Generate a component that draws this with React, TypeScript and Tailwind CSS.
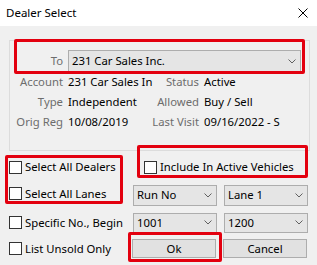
import React from "react";

const font = { fontFamily: '"Noto Sans", "Open Sans", sans-serif' };

function Chevron() {
  return (
    <svg width="8" height="5" viewBox="0 0 8 5" className="shrink-0">
      <path d="M0.5 0.5 L4 4 L7.5 0.5" fill="none" stroke="#606060" strokeWidth="1" />
    </svg>
  );
}

function Combo({ text, className }: { text: string; className: string }) {
  return (
    <div
      className={`flex items-center justify-between bg-[#e5e5e5] border border-[#adadad] pl-[3px] pr-[4px] text-[11.3px] text-black leading-none ${className}`}
    >
      <span>{text}</span>
      <Chevron />
    </div>
  );
}

function Check({ label, className = "" }: { label: string; className?: string }) {
  return (
    <div className={`flex items-center gap-[3px] ${className}`}>
      <div className="w-[13px] h-[13px] border border-[#333333] bg-white shrink-0" />
      <span className="text-[11.3px] text-black leading-none whitespace-nowrap">{label}</span>
    </div>
  );
}

function Button({ text }: { text: string }) {
  return (
    <div className="w-[84px] h-[19px] flex items-center justify-center bg-[#e1e1e1] border border-[#adadad] text-[11.3px] text-black leading-none">
      {text}
    </div>
  );
}

export default function App() {
  return (
    <div className="relative w-[317px] h-[265px] bg-[#f0f0f0] overflow-hidden" style={font}>
      {/* Title bar */}
      <div className="h-[26px] bg-white flex items-center justify-between pl-[6px] pr-[9px]">
        <span className="text-[11.5px] text-black leading-none">Dealer Select</span>
        <svg width="10" height="10" viewBox="0 0 10 10">
          <path d="M0.5 0.5 L9.5 9.5 M9.5 0.5 L0.5 9.5" stroke="#000" strokeWidth="1" />
        </svg>
      </div>

      {/* Group box */}
      <div className="ml-[9px] mt-[14px] w-[301px] h-[111px] border border-[#dcdcdc] pt-[9px]">
        <div className="flex items-center">
          <div className="w-[53px] text-right text-[11.3px] text-[#6d6d6d] leading-none">To</div>
          <Combo text="231 Car Sales Inc." className="ml-[5px] w-[233px] h-[22px]" />
        </div>
        <div className="grid grid-cols-[53px_77px_49px_1fr] gap-x-[5px] text-[11.3px] leading-none">
          <div className="h-[20px] flex items-center justify-end text-[#6d6d6d]">Account</div>
          <div className="h-[20px] flex items-center text-black whitespace-nowrap">231 Car Sales In</div>
          <div className="h-[20px] flex items-center justify-end text-[#6d6d6d]">Status</div>
          <div className="h-[20px] flex items-center text-black">Active</div>

          <div className="h-[20px] flex items-center justify-end text-[#6d6d6d]">Type</div>
          <div className="h-[20px] flex items-center text-black">Independent</div>
          <div className="h-[20px] flex items-center justify-end text-[#6d6d6d]">Allowed</div>
          <div className="h-[20px] flex items-center text-black">Buy / Sell</div>

          <div className="h-[20px] flex items-center justify-end text-[#6d6d6d] whitespace-nowrap">Orig Reg</div>
          <div className="h-[20px] flex items-center text-black">10/08/2019</div>
          <div className="h-[20px] flex items-center justify-end text-[#6d6d6d] whitespace-nowrap">Last Visit</div>
          <div className="h-[20px] flex items-center text-black whitespace-nowrap">09/16/2022 - S</div>
        </div>
      </div>

      {/* Options */}
      <div className="pl-[9px] mt-[6px]">
        <div className="flex h-[20px] items-center">
          <Check label="Select All Dealers" className="w-[135px]" />
          <Check label="Include In Active Vehicles" />
        </div>
        <div className="flex h-[22px] items-center mt-[7px]">
          <Check label="Select All Lanes" className="w-[124px] pb-[3px]" />
          <Combo text="Run No" className="w-[84px] h-[21px]" />
          <Combo text="Lane 1" className="ml-[7px] w-[84px] h-[21px]" />
        </div>
        <div className="flex h-[21px] items-center mt-[6px]">
          <Check label="Specific No., Begin" className="w-[124px]" />
          <Combo text="1001" className="w-[84px] h-[20px]" />
          <Combo text="1200" className="ml-[7px] w-[84px] h-[20px]" />
        </div>
        <div className="flex h-[19px] items-center mt-[6px]">
          <Check label="List Unsold Only" className="w-[123px]" />
          <Button text="Ok" />
          <div className="w-[7px]" />
          <Button text="Cancel" />
        </div>
      </div>

      {/* Red annotation boxes */}
      <div className="absolute left-[14px] top-[39px] w-[291px] h-[35px] border-[3px] border-[#e3000f] rounded-[2px]" />
      <div className="absolute left-[5px] top-[155px] w-[118px] h-[49px] border-[3px] border-[#e3000f] rounded-[2px]" />
      <div className="absolute left-[137px] top-[145px] w-[171px] h-[33px] border-[3px] border-[#e3000f] rounded-[2px]" />
      <div className="absolute left-[128px] top-[232px] w-[94px] h-[30px] border-[3px] border-[#e3000f] rounded-[2px]" />
    </div>
  );
}
